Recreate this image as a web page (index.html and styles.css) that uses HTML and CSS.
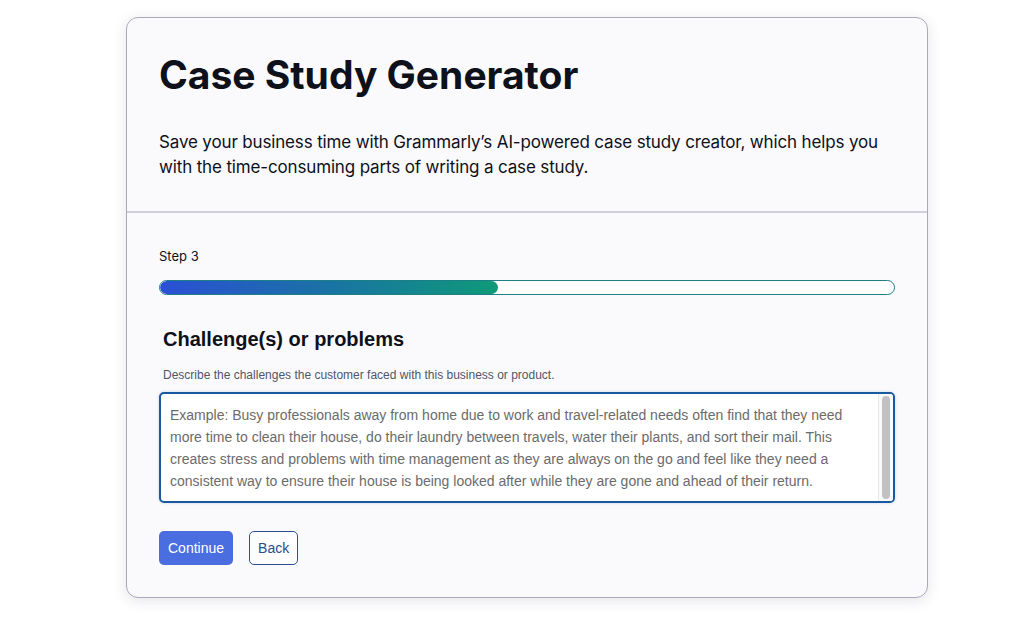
FILE: index.html
```html
<html>
	<head>
	<link rel="stylesheet" href="styles.css">
	</head>
	<body>
		<div class="card">
			<div class="header">
				<h1>Case Study Generator</h1>
				<p>Save your business time with Grammarly’s AI-powered case study creator, which helps you with the time-consuming parts of writing a case study.</p>
			</div>
			<div class="body">
				<div class="step">Step 3</div>
				<div class="progress"><div class="fill" style="width: 46%"></div></div>
				<form>
					<h2>Challenge(s) or problems</h2>
					<label for="txtchallenge">Describe the challenges the customer faced with this business or product.</label>
					<div class="field">
						<textarea id="txtchallenge" placeholder="Example: Busy professionals away from home due to work and travel-related needs often find that they need more time to clean their house, do their laundry between travels, water their plants, and sort their mail. This creates stress and problems with time management as they are always on the go and feel like they need a consistent way to ensure their house is being looked after while they are gone and ahead of their return."></textarea>
						<div class="scroll"><div class="thumb"></div></div>
					</div>
					<div class="buttons">
						<button type="button" class="primary">Continue</button>
						<button type="button" class="secondary">Back</button>
					</div>
				</form>
			</div>
		</div>
	</body>
</html>
```

FILE: styles.css
```css
*{
	margin: 0px;
	padding: 0px;
	box-sizing: border-box;
}
body{
	background: #ffffff;
	font-family: Inter, "Noto Sans", sans-serif;
	padding: 17px 0px 0px 126px;
}
.card{
	width: 802px;
	height: 581px;
	background: #fafafc;
	border: 1px solid #a9a9bb;
	border-radius: 12px;
	box-shadow: 0px 3px 14px rgba(40, 40, 80, 0.12);
	overflow: hidden;
}
.header{
	padding: 32px 32px 31px;
	border-bottom: 2px solid #d0d0dc;
}
.header h1{
	font-size: 39px;
	font-weight: 700;
	letter-spacing: 0px;
	color: #0e101a;
	line-height: 50px;
	margin-bottom: 30px;
}
.header p{
	font-size: 17px;
	letter-spacing: -0.15px;
	line-height: 25px;
	color: #0e101a;
}
.body{
	padding: 34px 32px 0px;
}
.step{
	font-size: 13px;
	color: #0e101a;
	line-height: 18px;
	margin-bottom: 15px;
}
.progress{
	height: 15px;
	border: 1px solid #1d7f86;
	border-radius: 8px;
	background: #ffffff;
	overflow: hidden;
}
.fill{
	height: 100%;
	border-radius: 8px;
	background: linear-gradient(to right, #2b4fd6, #1b6fa8 45%, #0e9a78);
}
form{
	font-family: "Liberation Sans", Arial, sans-serif;
}
h2{
	font-size: 20px;
	font-weight: 700;
	color: #0e101a;
	margin: 32px 0px 0px 4px;
	line-height: 24px;
}
label{
	display: block;
	font-size: 12px;
	color: #505668;
	margin: 17px 0px 0px 4px;
	line-height: 15px;
}
.field{
	display: flex;
	height: 111px;
	margin-top: 9px;
	border: 2px solid #1a58a0;
	border-radius: 5px;
	background: #ffffff;
	overflow: hidden;
	box-shadow: 0px 0px 3px rgba(26, 88, 160, 0.25);
}
textarea{
	flex: 1;
	padding: 10px 8px 8px 9px;
	border: none;
	outline: none;
	background: transparent;
	font-family: "Liberation Sans", Arial, sans-serif;
	font-size: 14px;
	line-height: 22px;
	resize: none;
	overflow: hidden;
}
textarea::placeholder{
	color: #6b6b6b;
}
.scroll{
	width: 15px;
	padding: 2px 3px;
	background: #fafafa;
	border-left: 1px solid #e8e8e8;
}
.thumb{
	height: 100%;
	background: #c1c1c1;
	border-radius: 5px;
}
.buttons{
	display: flex;
	gap: 16px;
	margin-top: 28px;
}
button{
	height: 34px;
	padding: 0px 8px;
	font-family: "Liberation Sans", Arial, sans-serif;
	font-size: 14px;
	border-radius: 5px;
}
.primary{
	padding: 0px 9px;
	background: #4a6ddf;
	color: #ffffff;
	border: none;
}
.secondary{
	background: #ffffff;
	color: #2a4a93;
	border: 1px solid #2d4f93;
}
```
